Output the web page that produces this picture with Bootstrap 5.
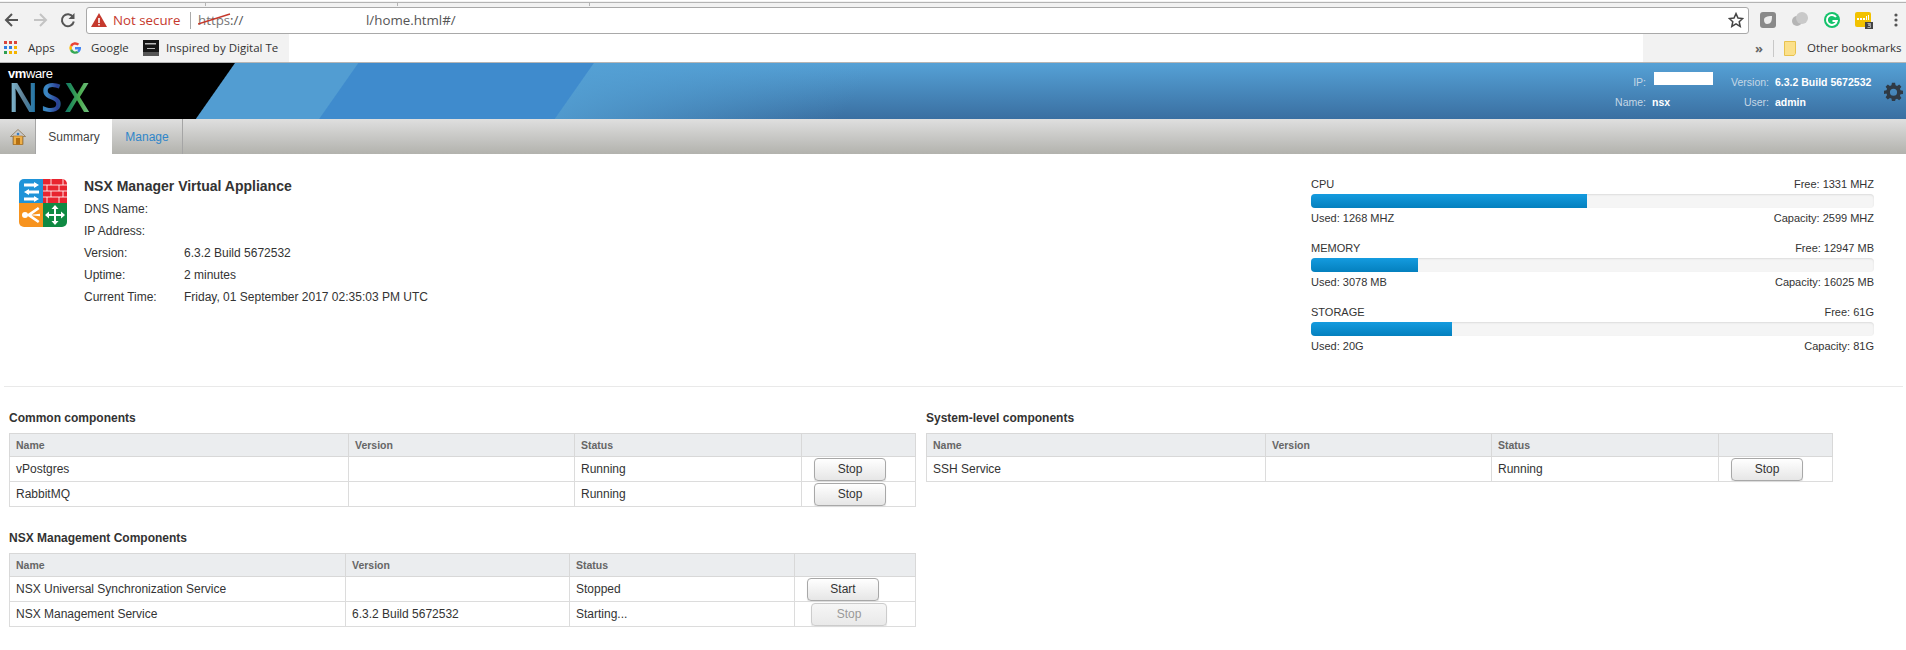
<!DOCTYPE html>
<html lang="en">
<head>
<meta charset="utf-8">
<title>NSX Manager Virtual Appliance</title>
<link href="https://cdn.jsdelivr.net/npm/bootstrap@5.3.0/dist/css/bootstrap.min.css" rel="stylesheet">
<style>
html,body{height:650px;overflow:hidden;background:#fff;}
body{font-family:"Liberation Sans",Arial,sans-serif;font-size:12px;color:#333;line-height:14px;}
.tab-strip{height:6px;background:#f2f2f2;border-top:1px solid #fff;}
.tab-strip-line{height:1px;background:#b4b4b4;margin-top:1px;}
.tab-strip-ticks{height:3px;width:590px;padding-left:205px;}
.tab-tick{width:1px;height:3px;background:#b4b4b4;}
.toolbar{height:28px;background:#f2f2f2;font-family:"Open Sans",sans-serif;}
.nav-ico{width:28px;height:28px;flex:none;}
.nav-first{margin-left:-2px;}
.url-box{width:1663px;height:27px;margin-left:4px;background:#fff;border:1px solid #a9a9a9;border-radius:3px;font-size:13.3px;color:#555;padding:0 4px 0 3px;}
.warn-ico{flex:none;}
.warn-txt{color:#c5392d;margin-left:5px;width:77px;}
.url-sep{width:1px;height:17px;background:#aaa;margin-right:7px;}
.url-host{width:168px;}
.https-strike{color:#777;position:relative;}
.https-strike svg{position:absolute;left:0;top:1px;}
.ext-row{gap:14px;margin-left:10px;}
.ext-ico{width:18px;height:18px;flex:none;}
.ext-dots{margin-left:6px;}
.bookmarks{height:28px;background:#f2f2f2;font-family:"Open Sans",sans-serif;font-size:11.5px;color:#333;}
.bm-left{width:289px;padding-left:4px;}
.bm-white{width:1354px;background:#fff;}
.bm-right{width:263px;}
.bm-txt{white-space:nowrap;}
.bm-ico{flex:none;}
.bm-apps{margin-left:10px;width:40px;}
.bm-google{margin-left:9px;width:52px;}
.bm-insp{margin-left:7px;}
.bm-more{margin-left:112px;color:#666;font-weight:bold;font-size:13px;}
.bm-other{margin-left:10px;}
.bm-sep{width:1px;height:17px;background:#c8c8c8;margin:0 10px 0 10px;}
.vm-head{height:57px;border-top:1px solid #b5b5b5;color:#fff;
 background:
  linear-gradient(125deg,#000 0,#000 192px,#529dd2 193px,#529dd2 293px,#3f8bcd 294px,#3f8bcd 486px,rgba(0,0,0,0) 487px),
  linear-gradient(125deg,rgba(84,160,212,.85) 487px,rgba(84,160,212,0) 720px),
  linear-gradient(180deg,#55a1d6 0,#3a6fa1 100%);}
.logo-box{padding:4px 0 0 8px;width:180px;}
.vm-word{font-size:13px;line-height:13px;letter-spacing:-.4px;color:#fff;margin-bottom:1px;}
.nsx-word{font-family:"Open Sans",sans-serif;font-weight:600;font-size:39px;line-height:32px;height:32px;width:88px;letter-spacing:2.5px;
 background:linear-gradient(90deg,#86c3dc 0,#5c7d92 18%,#1d78ae 32%,#3e88c4 44%,#2b3f96 56%,#168060 68%,#4cae50 82%,#8ec7a8 100%);
 -webkit-background-clip:text;background-clip:text;color:transparent;}
.head-info{font-size:10.5px;line-height:14px;padding-top:12px;color:#c6d8e6;white-space:nowrap;}
.head-row{height:20px;}
.h-lab{text-align:right;}
.h-lab-a{width:141px;}
.h-lab-b{width:50px;}
.h-val{color:#fff;font-weight:bold;margin-left:6px;}
.h-val-a{width:67px;}
.h-val-b{width:98px;}
.redact{display:block;width:59px;height:13px;background:#fff;margin:-3px 0 0 2px;}
.gear-box{width:33px;padding-left:11px;align-self:center;}
.gear-ico{display:block;}
.vm-tabs{height:35px;background:linear-gradient(180deg,#dfdfdf 0,#b2b2ad 100%);}
.tab-home{width:36px;border-right:1px solid #a5a5a5;}
.tab-cell{font-size:12px;color:#2f86c9;width:71px;border-right:1px solid #a5a5a5;}
.tab-active{width:76px;background:#fff;color:#444;border-right:0;}
.summary-sec{padding:21px 32px 33px 19px;}
.fw-ico{width:48px;height:48px;margin-top:4px;margin-right:17px;flex:none;}
.sum-title{font-size:14px;font-weight:bold;line-height:22px;margin-bottom:1px;color:#333;}
.sum-row{height:22px;line-height:22px;}
.sum-lab{width:100px;}
.res-col{width:563px;padding-top:2px;font-size:11px;}
.res-item{margin-bottom:16px;}
.res-item:last-child{margin-bottom:0;}
.res-bar{height:14px;margin:3px 0;background:#f5f5f5;border-radius:4px;box-shadow:inset 0 1px 2px rgba(0,0,0,.1);}
.res-fill{background:linear-gradient(180deg,#149bdf,#0480be);}
.sep-line{margin:0 3px 0 4px;border:0;border-top:1px solid #e9e9e9;opacity:1;}
.comp-sec{padding:24px 0 0 9px;gap:11px;}
.comp-col{width:906px;}
.comp-head{font-weight:bold;font-size:12px;line-height:14px;margin-bottom:8px;color:#333;}
.comp-head-b{margin-top:24px;}
.comp-tbl{table-layout:fixed;width:906px;margin:0;border-collapse:collapse;font-size:12px;color:#333;}
.comp-tbl th,.comp-tbl td{border:1px solid #dcdcdc;padding:0 0 0 6px;vertical-align:middle;line-height:14px;box-shadow:none;}
.comp-tbl th{height:23px;background:#ebedef;color:#666;font-size:10.5px;font-weight:bold;border-color:#d8d8d8;}
.comp-tbl td{height:25px;}
.comp-tbl td.act-cell{padding:0 0 0 12px;}
.col-a1{width:339px;}.col-a2{width:226px;}.col-a3{width:227px;}.col-a4{width:114px;}
.col-b1{width:336px;}.col-b2{width:224px;}.col-b3{width:225px;}.col-b4{width:121px;}
.btn-vm{display:block;width:72px;height:23px;padding:0;font-size:12px;line-height:21px;color:#333;border:1px solid #a8a8a8;border-radius:4px;background:linear-gradient(180deg,#fff,#e6e6e6);box-shadow:0 1px 1px rgba(0,0,0,.15);}
.btn-vm:disabled{color:#999;border-color:#ccc;background:linear-gradient(180deg,#f6f6f6,#e9e9e9);opacity:1;width:76px;margin-left:4px;}
</style>
</head>
<body>

<div class="tab-strip">
  <div class="tab-strip-line"></div>
  <div class="tab-strip-ticks d-flex justify-content-between"><span class="tab-tick"></span><span class="tab-tick"></span><span class="tab-tick"></span></div>
</div>

<div class="toolbar d-flex align-items-center">
  <svg class="nav-ico nav-first" viewBox="0 0 28 28"><path d="M20 14H9M14 8l-6 6 6 6" fill="none" stroke="#555" stroke-width="2"/></svg>
  <svg class="nav-ico" viewBox="0 0 28 28"><path d="M8 14h11M14 8l6 6-6 6" fill="none" stroke="#c4c4c4" stroke-width="2"/></svg>
  <svg class="nav-ico" viewBox="0 0 28 28"><path d="M19 11a6 6 0 1 0 .8 4.500" fill="none" stroke="#555" stroke-width="2"/><path d="M20.500 7v6h-6z" fill="#555"/></svg>
  <div class="url-box d-flex align-items-center">
    <svg class="warn-ico" width="18" height="16" viewBox="0 0 18 16"><path d="M9 1l8 14H1z" fill="#c5392d"/><path d="M8.200 6h1.600v5H8.200zM8.200 12h1.600v1.600H8.200z" fill="#fff"/></svg>
    <span class="warn-txt">Not secure</span>
    <span class="url-sep"></span>
    <span class="url-host"><span class="https-strike">https<svg width="34" height="16" viewBox="0 0 34 16"><path d="M0 12L32 2" stroke="#c5392d" stroke-width="1.400"/></svg></span><span>://</span></span>
    <span>l/home.html#/</span>
    <svg class="ms-auto" width="16" height="16" viewBox="0 0 16 16"><path d="M8 1.600l2 4.400 4.700.5-3.500 3.200 1 4.700L8 11.900 3.800 14.400l1-4.700L1.300 6.500 6 6z" fill="none" stroke="#444" stroke-width="1.500"/></svg>
  </div>
  <div class="ext-row d-flex align-items-center">
    <svg class="ext-ico" viewBox="0 0 18 18"><rect x="1" y="1" width="16" height="16" rx="3" fill="#8a8a8a"/><path d="M5 9c0-3 3-4 8-4 0 5-1 8-5 8-2 0-3-2-3-4z" fill="#eee"/></svg>
    <svg class="ext-ico" viewBox="0 0 18 18"><circle cx="6" cy="10" r="5" fill="#b5b5b5"/><circle cx="11" cy="7" r="6" fill="#c9c9c9"/></svg>
    <svg class="ext-ico" viewBox="0 0 18 18"><circle cx="9" cy="9" r="8" fill="#15c26b"/><path d="M13 6a5 5 0 1 0 .8 4H9.500" fill="none" stroke="#fff" stroke-width="2"/></svg>
    <svg class="ext-ico" viewBox="0 0 18 18"><rect x="0" y="1" width="16" height="15" rx="2" fill="#f2c200"/><path d="M2 7h2v2H2zM5 7h2v2H5zM8 7h2v2H8zM11 5h1v4h-1zM13 4h1v5h-1z" fill="#fff"/><rect x="10" y="11" width="8" height="7" fill="#444"/><path d="M12.500 12.500h3v1.200h-2v.800h2v2h-3" fill="none" stroke="#ddd" stroke-width=".7"/></svg>
    <svg class="ext-dots" width="6" height="16" viewBox="0 0 6 16"><circle cx="3" cy="3" r="1.600" fill="#555"/><circle cx="3" cy="8" r="1.600" fill="#555"/><circle cx="3" cy="13" r="1.600" fill="#555"/></svg>
  </div>
</div>

<div class="bookmarks d-flex">
  <div class="bm-left d-flex align-items-center">
    <svg class="bm-ico" width="14" height="14" viewBox="0 0 14 14"><path fill="#d9453a" d="M0 0h3v3H0zM5 0h3v3H5zM10 0h3v3h-3z"/><path fill="#2f7de1" d="M0 5h3v3H0zM5 5h3v3H5z"/><path fill="#f4b400" d="M10 5h3v3h-3zM10 10h3v3h-3zM5 10h3v3H5z"/><path fill="#2e9e52" d="M0 10h3v3H0z"/></svg>
    <span class="bm-txt bm-apps">Apps</span>
    <svg class="bm-ico" width="14" height="14" viewBox="0 0 14 14"><path d="M2 4.200A6 6 0 0 1 11.300 2.800L9.500 4.600A3.500 3.500 0 0 0 4 5.900z" fill="#ea4335"/><path d="M2 4.200L4 5.900a3.500 3.500 0 0 0 0 2.200L2 9.800a6 6 0 0 1 0-5.600z" fill="#fbbc05"/><path d="M2 9.800L4 8.100A3.500 3.500 0 0 0 9 10l1.900 1.600A6 6 0 0 1 2 9.800z" fill="#34a853"/><path d="M13 6H7v2.400h3.400c-.3.700-.8 1.200-1.400 1.600l1.900 1.600C12.300 10.300 13.300 8.300 13 6z" fill="#4285f4"/></svg>
    <span class="bm-txt bm-google">Google</span>
    <svg class="bm-ico" width="16" height="16" viewBox="0 0 16 16"><rect width="16" height="16" fill="#161616"/><path d="M2 3h11v1.500H2zM4 8h8v1H4z" fill="#bbb"/><rect y="12" width="16" height="4" fill="#555"/></svg>
    <span class="bm-txt bm-insp">Inspired by Digital Te</span>
  </div>
  <div class="bm-white"></div>
  <div class="bm-right d-flex align-items-center">
    <span class="bm-more">»</span>
    <span class="bm-sep"></span>
    <svg class="bm-ico" width="13" height="15" viewBox="0 0 13 15"><path d="M.500.500h11v12l-1.500 2h-9.500z" fill="#fbe08a" stroke="#e8c24e"/></svg>
    <span class="bm-txt bm-other">Other bookmarks</span>
  </div>
</div>

<header class="vm-head d-flex">
  <div class="logo-box flex-shrink-0">
    <div class="vm-word"><b>vm</b>ware</div>
    <div class="nsx-word">NSX</div>
  </div>
  <div class="flex-grow-1"></div>
  <div class="head-info">
    <div class="head-row d-flex"><span class="h-lab h-lab-a">IP:</span><span class="h-val h-val-a"><span class="redact"></span></span><span class="h-lab h-lab-b">Version:</span><span class="h-val h-val-b">6.3.2 Build 5672532</span></div>
    <div class="head-row d-flex"><span class="h-lab h-lab-a">Name:</span><span class="h-val h-val-a">nsx</span><span class="h-lab h-lab-b">User:</span><span class="h-val h-val-b">admin</span></div>
  </div>
  <div class="gear-box">
    <svg class="gear-ico" width="19" height="19" viewBox="0 0 24 24"><path fill="#2f3a45" fill-rule="evenodd" d="M10 1h4l.6 3.200 1.900.8L19.200 3.100l2.800 2.800-1.900 2.700.8 1.900L24 11v4l-3.100.6-.8 1.900 1.900 2.700-2.800 2.800-2.700-1.900-1.900.8L14 24h-4l-.6-3.100-1.900-.8-2.700 1.900L2 19.200l1.900-2.700-.8-1.900L0 15v-4l3.100-.6.800-1.900L2 5.900l2.800-2.800 2.700 1.900 1.900-.8zM12 8.500a4.500 4.500 0 1 0 0 9 4.500 4.500 0 0 0 0-9z"/></svg>
  </div>
</header>

<nav class="vm-tabs d-flex">
  <div class="tab-home d-flex align-items-center justify-content-center">
    <svg width="16" height="16" viewBox="0 0 16 16"><path d="M8 .500L.500 7.500h2.500V15.500h10V7.500h2.500z" fill="#c7c9cc" stroke="#7a5a2a" stroke-width=".6"/><rect x="3.500" y="7" width="9" height="8.500" fill="#eeb04a" stroke="#a86c14" stroke-width=".6"/><rect x="6" y="9" width="4" height="6.500" fill="#b36f12"/><circle cx="8" cy="5" r="1.300" fill="#3a7fc0"/></svg>
  </div>
  <div class="tab-cell tab-active d-flex align-items-center justify-content-center">Summary</div>
  <div class="tab-cell d-flex align-items-center justify-content-center">Manage</div>
</nav>

<section class="summary-sec d-flex justify-content-between align-items-start">
  <div class="d-flex">
    <svg class="fw-ico" viewBox="0 0 48 48">
      <defs><clipPath id="fwclip"><rect width="48" height="48" rx="5"/></clipPath></defs>
      <g clip-path="url(#fwclip)">
        <rect width="24" height="24" fill="#1f93d8"/>
        <rect x="24" width="24" height="24" fill="#e8242f"/>
        <rect y="24" width="24" height="24" fill="#f7931e"/>
        <rect x="24" y="24" width="24" height="24" fill="#0f8a43"/>
        <path d="M5 5.500h10V4l5 3-5 3V8.500H5zM20 12.500H10V11l-5 3 5 3v-1.500h10zM5 19.500h10V18l5 3-5 3v-1.500H5z" fill="#fff" transform="translate(0,-1)"/>
        <path d="M24 6h24M24 12h24M24 18h24M32 0v6M44 0v6M28 6v6M40 6v6M32 12v6M44 12v6M28 18v6M40 18v6" stroke="#fff" stroke-width="1" opacity=".85" fill="none"/>
        <circle cx="6" cy="36" r="3" fill="#fff"/>
        <path d="M8 35.500L19 28l1.500 2-8 5.800 8.500-1v2.400l-8.500-1 8 5.800-1.500 2L8 36.500z" fill="#fff"/>
        <path d="M36 26l3.500 4H37v5h5v-2.500l4 3.500-4 3.500V37h-5v5h2.500L36 46l-3.500-4H35v-5h-5v2.500L26 36l4-3.500V35h5v-5h-2.500z" fill="#fff"/>
      </g>
    </svg>
    <div>
      <div class="sum-title">NSX Manager Virtual Appliance</div>
      <div class="sum-row d-flex"><span class="sum-lab">DNS Name:</span><span></span></div>
      <div class="sum-row d-flex"><span class="sum-lab">IP Address:</span><span></span></div>
      <div class="sum-row d-flex"><span class="sum-lab">Version:</span><span>6.3.2 Build 5672532</span></div>
      <div class="sum-row d-flex"><span class="sum-lab">Uptime:</span><span>2 minutes</span></div>
      <div class="sum-row d-flex"><span class="sum-lab">Current Time:</span><span>Friday, 01 September 2017 02:35:03 PM UTC</span></div>
    </div>
  </div>
  <div class="res-col">
    <div class="res-item">
      <div class="d-flex justify-content-between"><span>CPU</span><span>Free: 1331 MHZ</span></div>
      <div class="progress res-bar"><div class="progress-bar res-fill" style="width:49%"></div></div>
      <div class="d-flex justify-content-between"><span>Used: 1268 MHZ</span><span>Capacity: 2599 MHZ</span></div>
    </div>
    <div class="res-item">
      <div class="d-flex justify-content-between"><span>MEMORY</span><span>Free: 12947 MB</span></div>
      <div class="progress res-bar"><div class="progress-bar res-fill" style="width:19%"></div></div>
      <div class="d-flex justify-content-between"><span>Used: 3078 MB</span><span>Capacity: 16025 MB</span></div>
    </div>
    <div class="res-item">
      <div class="d-flex justify-content-between"><span>STORAGE</span><span>Free: 61G</span></div>
      <div class="progress res-bar"><div class="progress-bar res-fill" style="width:25%"></div></div>
      <div class="d-flex justify-content-between"><span>Used: 20G</span><span>Capacity: 81G</span></div>
    </div>
  </div>
</section>

<hr class="sep-line">

<section class="comp-sec d-flex align-items-start">
  <div class="comp-col">
    <div class="comp-head">Common components</div>
    <table class="table comp-tbl">
      <colgroup><col class="col-a1"><col class="col-a2"><col class="col-a3"><col class="col-a4"></colgroup>
      <thead><tr><th>Name</th><th>Version</th><th>Status</th><th></th></tr></thead>
      <tbody>
        <tr><td>vPostgres</td><td></td><td>Running</td><td class="act-cell"><button class="btn btn-vm" type="button">Stop</button></td></tr>
        <tr><td>RabbitMQ</td><td></td><td>Running</td><td class="act-cell"><button class="btn btn-vm" type="button">Stop</button></td></tr>
      </tbody>
    </table>
    <div class="comp-head comp-head-b">NSX Management Components</div>
    <table class="table comp-tbl">
      <colgroup><col class="col-b1"><col class="col-b2"><col class="col-b3"><col class="col-b4"></colgroup>
      <thead><tr><th>Name</th><th>Version</th><th>Status</th><th></th></tr></thead>
      <tbody>
        <tr><td>NSX Universal Synchronization Service</td><td></td><td>Stopped</td><td class="act-cell"><button class="btn btn-vm" type="button">Start</button></td></tr>
        <tr><td>NSX Management Service</td><td>6.3.2 Build 5672532</td><td>Starting...</td><td class="act-cell"><button class="btn btn-vm" type="button" disabled>Stop</button></td></tr>
      </tbody>
    </table>
  </div>
  <div class="comp-col">
    <div class="comp-head">System-level components</div>
    <table class="table comp-tbl">
      <colgroup><col class="col-a1"><col class="col-a2"><col class="col-a3"><col class="col-a4"></colgroup>
      <thead><tr><th>Name</th><th>Version</th><th>Status</th><th></th></tr></thead>
      <tbody>
        <tr><td>SSH Service</td><td></td><td>Running</td><td class="act-cell"><button class="btn btn-vm" type="button">Stop</button></td></tr>
      </tbody>
    </table>
  </div>
</section>

<script src="https://cdn.jsdelivr.net/npm/bootstrap@5.3.0/dist/js/bootstrap.bundle.min.js"></script>
</body>
</html>
